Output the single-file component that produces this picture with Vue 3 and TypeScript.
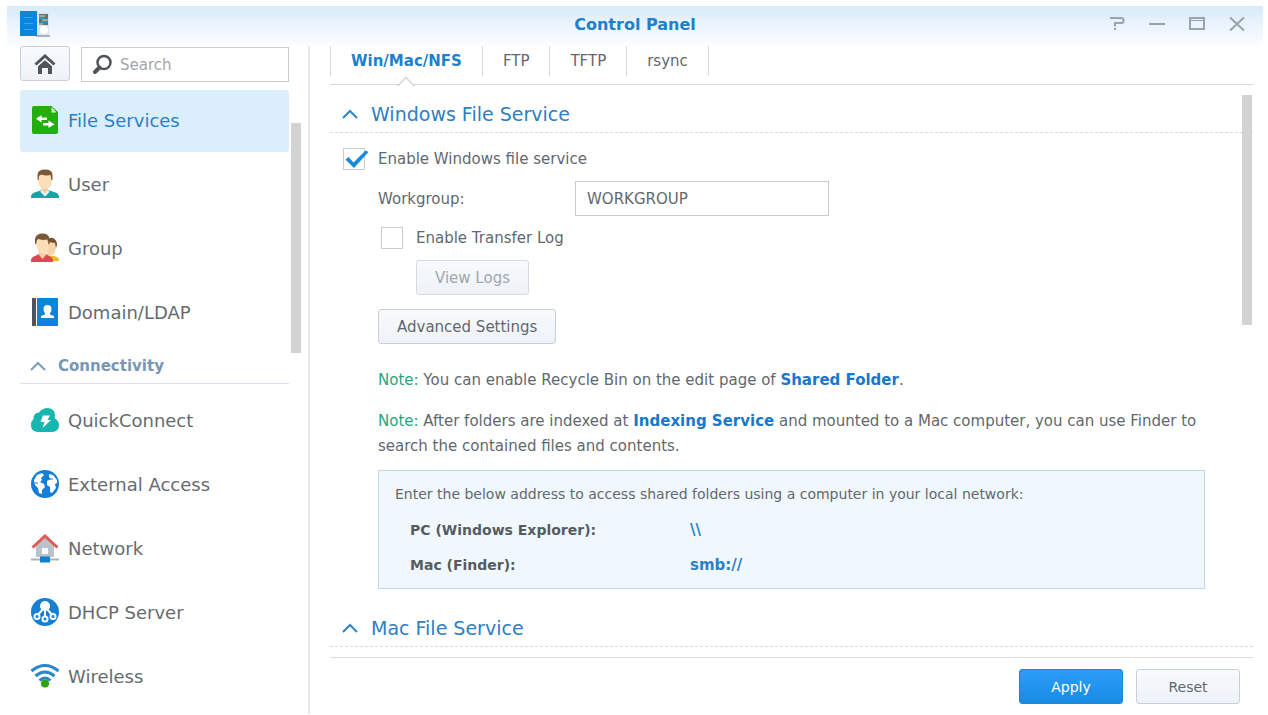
<script setup lang="ts">
import { ref } from 'vue'

type IconName = 'file' | 'user' | 'group' | 'domain' | 'quick' | 'globe' | 'network' | 'dhcp' | 'wifi'
interface NavItem { label: string; icon: IconName }

const sharing: NavItem[] = [
  { label: 'File Services', icon: 'file' },
  { label: 'User', icon: 'user' },
  { label: 'Group', icon: 'group' },
  { label: 'Domain/LDAP', icon: 'domain' },
]
const connectivity: NavItem[] = [
  { label: 'QuickConnect', icon: 'quick' },
  { label: 'External Access', icon: 'globe' },
  { label: 'Network', icon: 'network' },
  { label: 'DHCP Server', icon: 'dhcp' },
  { label: 'Wireless', icon: 'wifi' },
]
const groups = [
  { title: '', items: sharing },
  { title: 'Connectivity', items: connectivity },
]
const tabs = ['Win/Mac/NFS', 'FTP', 'TFTP', 'rsync']

const activeItem = ref('File Services')
const activeTab = ref('Win/Mac/NFS')
const search = ref('')
const windowsEnabled = ref(true)
const transferLog = ref(false)
const workgroup = ref('WORKGROUP')
</script>

<template>
  <div class="window">
    <header class="titlebar">
      <svg class="app-icon" width="32" height="28" viewBox="0 0 32 28" aria-hidden="true">
        <rect x="16" y="2" width="14" height="24" fill="#dde6ee" />
        <rect x="17" y="25" width="14" height="2" fill="#a9b4bd" />
        <rect x="1" y="1" width="17" height="25" fill="#0a86dc" />
        <path d="M5 7.500h9M5 13.500h9M5 19.500h9" stroke="#3aa3ea" />
        <rect x="20" y="4" width="9" height="11" fill="#58787d" />
        <path d="M20 6h6M23 10h6M20 14h4" stroke="#d8dc9a" />
        <path d="M20 8h5M23 12h5" stroke="#2f93c9" stroke-width="2" />
        <circle cx="25" cy="20" r="4" fill="#fff" />
      </svg>
      <h1 class="title">Control Panel</h1>
      <div class="controls">
        <button type="button" aria-label="Help">
          <svg width="16" height="16" viewBox="0 0 16 16"><path d="M1 2h11.500q2 0 2 2v1q0 2-2 2H6v3.500" fill="none" stroke="#98a3ae" stroke-width="2" /><rect x="5" y="12" width="2" height="2" fill="#98a3ae" /></svg>
        </button>
        <button type="button" aria-label="Minimize">
          <svg width="16" height="16" viewBox="0 0 16 16"><path d="M0 8h16" stroke="#98a3ae" stroke-width="2" /></svg>
        </button>
        <button type="button" aria-label="Maximize">
          <svg width="16" height="16" viewBox="0 0 16 16"><path d="M1 2h14v11H1z" fill="none" stroke="#98a3ae" stroke-width="2" /><path d="M2 4.500h12" stroke="#98a3ae" /></svg>
        </button>
        <button type="button" aria-label="Close">
          <svg width="16" height="16" viewBox="0 0 16 16"><path d="M1 1.500l14 13M15 1.500l-14 13" stroke="#98a3ae" stroke-width="2" /></svg>
        </button>
      </div>
    </header>

    <div class="body">
      <aside class="sidebar">
        <div class="tools">
          <button type="button" class="btn home" aria-label="Home">
            <svg width="22" height="22" viewBox="0 0 22 22"><path d="M1.500 11.500L11 3l9.500 8.500" fill="none" stroke="#50555b" stroke-width="3" /><path d="M4 13l7-6 7 6v8h-4v-6H8v6H4z" fill="#50555b" /><path d="M4 12.800L11 6.500l7 6.300" fill="none" stroke="#f4f7fa" /></svg>
          </button>
          <div class="search">
            <svg width="22" height="22" viewBox="0 0 22 22" aria-hidden="true"><circle cx="13" cy="8.500" r="6.500" fill="none" stroke="#50555b" stroke-width="2.500" /><path d="M8.500 13.500L4 18" stroke="#50555b" stroke-width="4" stroke-linecap="round" /></svg>
            <input v-model="search" type="text" placeholder="Search" aria-label="Search">
          </div>
        </div>

        <nav class="nav">
          <template v-for="group in groups" :key="group.title">
            <button v-if="group.title" type="button" class="category">
              <svg width="16" height="12" viewBox="0 0 16 12"><path d="M1 10l7-7 7 7" fill="none" stroke="#7d9cb9" stroke-width="2" /></svg>
              {{ group.title }}
            </button>
            <a
              v-for="item in group.items"
              :key="item.label"
              href="#"
              class="item"
              :class="{ active: item.label === activeItem }"
              @click.prevent="activeItem = item.label"
            >
              <svg class="icon" width="30" height="30" viewBox="0 0 30 30" aria-hidden="true">
                <g v-if="item.icon === 'file'">
                  <path d="M4 1h17.500L28 7v20q0 2-2 2H4q-2 0-2-2V3q0-2 2-2z" fill="#22ae0c" />
                  <path d="M21.500 2v5.500h5z" fill="#d9f2d2" />
                  <path d="M11.500 10v2.500H17v2.500h-5.500v2.500L6 13.700zM18.500 15.500V18H13v2.500h5.500V23l6-3.800z" fill="#fff" />
                </g>
                <g v-else-if="item.icon === 'user'">
                  <path d="M1 29v-1q0-4 5-5l6-2h6l6 2q5 1 5 5v1z" fill="#12a7a4" />
                  <path d="M12 17h6v5l-3 4-4-3z" fill="#f2cda0" />
                  <path d="M11 22l4 4 4-4" fill="none" stroke="#e9faf8" stroke-width="2" />
                  <path d="M8 6q1-4 7-4t7 4v5q0 9-7 9t-7-9z" fill="#fbdfb9" />
                  <path d="M7.500 11V6q0-5.500 7.500-5.500T22.500 6v5h-1l-1-5q-5 1-9-.5L9 7l-.5 4z" fill="#7b5837" />
                </g>
                <g v-else-if="item.icon === 'group'">
                  <path d="M18 28h11v-1q0-3-5-4h-6z" fill="#eabd22" />
                  <path d="M17 9q2-4 6-3 4 2 3 7-.5 7-3 9l-6 2z" fill="#f8d4a8" />
                  <path d="M17 8q2-4 6-3 4 2 4 7l-1 3-1-5-7-1z" fill="#76502f" />
                  <path d="M1 29v-1q0-4 4-5l4-2h7l3 2q4 1 4 5v1z" fill="#e34556" />
                  <path d="M9 17h7v5l-3.500 4L9 22z" fill="#f2cda0" />
                  <path d="M6 6q1-4 7-4t6 4v5q-1 10-6 10T6 11z" fill="#fbdfb9" />
                  <path d="M5 11V6q1-5.500 7.500-5.500T19.500 6v5l-1 .5-1-5q-5 1-9-.5L7 7l-1 4z" fill="#7b5837" />
                </g>
                <g v-else-if="item.icon === 'domain'">
                  <path d="M2 1h4v28H2z" fill="#4c555f" />
                  <path d="M7 1h21v28H7z" fill="#0a84dc" />
                  <path d="M13.500 12q0-4 4-4t4 4q0 3-1.500 4v1.500l4 1.500v2H11v-2l4-1.500V16q-1.500-1-1.500-4z" fill="#fff" />
                </g>
                <g v-else-if="item.icon === 'quick'">
                  <path d="M8 27q-7 0-7-7 0-4 2.500-6-.5-6 5.500-6.500Q12 3 18 3q7 1 7 7 0 2-.5 3 4.500 3 4.500 7 0 7-7 7z" fill="#17b7b0" />
                  <path d="M13 10.500h7l-2.500 4.500H21l-8.500 8 2-6H10.500z" fill="#fff" />
                </g>
                <g v-else-if="item.icon === 'globe'">
                  <circle cx="15" cy="15" r="14" fill="#147fd7" />
                  <path d="M4 11l3-5 5-2 2 2-3 3 1 2-2 2 4 2 1 3-3 3v4l-3-1-1-5-3-3zM19 5l4 1 4 5v3l-2 1 1 4-4 5-2-1v-5l-3-2v-4l4-2-2-2z" fill="#fff" />
                  <path d="M20 10h3M5 14h3" stroke="#147fd7" />
                </g>
                <g v-else-if="item.icon === 'network'">
                  <path d="M6 12l9-8 9 8v12H6z" fill="#bcc2cc" />
                  <path d="M12 15h6v6h-6z" fill="#fff" />
                  <path d="M2.500 14.500L15 3l12.500 11.500" fill="none" stroke="#e05a55" stroke-width="3" />
                  <path d="M1 26.500h28" stroke="#a9b2bb" stroke-width="2" />
                  <path d="M10 23.500h10v6H10z" fill="#147fca" />
                </g>
                <g v-else-if="item.icon === 'dhcp'">
                  <circle cx="15" cy="15" r="14" fill="#1580d3" />
                  <path d="M15 10v10M13 12l-6 7M17 12l6 7" stroke="#fff" stroke-width="2" />
                  <circle cx="15" cy="9" r="5" fill="#fff" />
                  <g fill="#1580d3" stroke="#fff" stroke-width="2"><circle cx="7" cy="19.500" r="2.500" /><circle cx="15" cy="22" r="2.500" /><circle cx="23" cy="19.500" r="2.500" /></g>
                </g>
                <g v-else>
                  <g fill="none" stroke="#2b86cd" stroke-width="3"><path d="M1.500 10q13.500-11 27 0" /><path d="M5.500 15q9.500-8 19 0" /><path d="M9.500 19.500q5.500-5 11 0" /></g>
                  <circle cx="15" cy="22.500" r="4" fill="#2da30f" />
                </g>
              </svg>
              {{ item.label }}
            </a>
          </template>
          <div class="thumb nav-thumb"></div>
        </nav>
      </aside>

      <main class="main">
        <div class="tabs" role="tablist">
          <button
            v-for="tab in tabs"
            :key="tab"
            type="button"
            role="tab"
            class="tab"
            :class="{ active: tab === activeTab }"
            :aria-selected="tab === activeTab"
            @click="activeTab = tab"
          >
            {{ tab }}
            <svg v-if="tab === activeTab" class="notch" width="18" height="10" viewBox="0 0 18 10"><path d="M0 10L9 1l9 9z" fill="#fff" /><path d="M0 9.500h1L9 1.500l8 8h1" fill="none" stroke="#d4d6d9" stroke-width="1.500" /></svg>
          </button>
        </div>

        <div class="content">
          <h2 class="section">
            <svg width="16" height="12" viewBox="0 0 16 12" aria-hidden="true"><path d="M1 10l7-7 7 7" fill="none" stroke="#2a86c8" stroke-width="2" /></svg>
            Windows File Service
          </h2>

          <form class="form" @submit.prevent>
            <label class="check">
              <span class="box">
                <input v-model="windowsEnabled" type="checkbox">
                <svg v-if="windowsEnabled" width="26" height="22" viewBox="0 0 26 22"><path d="M2.500 11.500l3-2.500 5 5.500L22.500 2.500l3 1.500L11 20z" fill="#168add" /></svg>
              </span>
              Enable Windows file service
            </label>
            <div class="fields">
              <div class="row">
                <label for="workgroup">Workgroup:</label>
                <input id="workgroup" v-model="workgroup" type="text">
              </div>
              <label class="check log">
                <span class="box"><input v-model="transferLog" type="checkbox"></span>
                Enable Transfer Log
              </label>
              <button type="button" class="btn view" disabled>View Logs</button>
              <button type="button" class="btn advanced">Advanced Settings</button>
              <p><span class="note">Note:</span> You can enable Recycle Bin on the edit page of <a href="#">Shared Folder</a>.</p>
              <p><span class="note">Note:</span> After folders are indexed at <a href="#">Indexing Service</a> and mounted to a Mac computer, you can use Finder to search the contained files and contents.</p>
              <div class="panel">
                <div class="lead">Enter the below address to access shared folders using a computer in your local network:</div>
                <dl>
                  <dt>PC (Windows Explorer):</dt><dd>\\</dd>
                  <dt>Mac (Finder):</dt><dd>smb://</dd>
                </dl>
              </div>
            </div>
          </form>

          <h2 class="section">
            <svg width="16" height="12" viewBox="0 0 16 12" aria-hidden="true"><path d="M1 10l7-7 7 7" fill="none" stroke="#2a86c8" stroke-width="2" /></svg>
            Mac File Service
          </h2>
          <div class="thumb main-thumb"></div>
        </div>

        <footer class="footer">
          <button type="button" class="btn primary">Apply</button>
          <button type="button" class="btn reset">Reset</button>
        </footer>
      </main>
    </div>
  </div>
</template>

<style>
body { margin: 0; background: #fff; }
</style>

<style scoped>
.window {
  box-sizing: border-box;
  display: flex;
  flex-direction: column;
  min-height: 100vh;
  padding: 6px 5px 1px 7px;
  font-family: "DejaVu Sans", Verdana, sans-serif;
  font-size: 15px;
  color: #62686e;
}
.window *, .window *::before { box-sizing: border-box; }
button, input { font: inherit; color: inherit; }
a { color: #1878cc; text-decoration: none; }
svg { display: block; flex: none; }

.titlebar {
  display: grid;
  grid-template-columns: 1fr auto 1fr;
  align-items: center;
  height: 40px;
  padding: 0 12px 4px;
  background: linear-gradient(#d9ebfa, #fcfdff);
}
.title { margin: 0; font-size: 16px; font-weight: bold; color: #217fca; }
.controls { display: flex; justify-content: flex-end; gap: 24px; padding-right: 6px; }
.controls button { padding: 0; border: 0; background: none; }

.body { flex: 1; display: grid; grid-template-columns: 303px minmax(0, 1fr); }
.sidebar { padding: 0 19px 0 13px; border-right: 2px solid #e6e7e9; }
.tools { display: flex; gap: 11px; align-items: flex-start; }
.btn {
  display: flex;
  align-items: center;
  justify-content: center;
  height: 35px;
  padding: 0 18px;
  border: 1px solid #c9cfd6;
  border-radius: 3px;
  background: linear-gradient(#f8fafc, #eef2f8);
}
.home { flex: none; width: 50px; padding: 0; }
.search { flex: 1; min-width: 0; display: flex; align-items: center; gap: 7px; height: 35px; margin-top: 1px; padding: 0 9px; border: 1px solid #c9cccf; }
.search input { flex: 1; min-width: 0; padding: 0; border: 0; outline: 0; background: none; }
.search input::placeholder { color: #a2a6aa; opacity: 1; }

.nav { position: relative; display: flex; flex-direction: column; gap: 2px; margin-top: 8px; }
.item { display: flex; align-items: center; gap: 8px; height: 62px; padding: 0 0 2px 10px; border-radius: 3px; font-size: 18px; color: #666b70; }
.item.active { background: #dbeefc; color: #2b7fc6; }
.category {
  display: flex;
  align-items: center;
  gap: 12px;
  height: 40px;
  margin: -2px 0 4px;
  padding: 4px 10px 0;
  border: 0;
  border-bottom: 1px solid #dbe2e9;
  background: none;
  font-weight: bold;
  color: #7797b5;
}
.thumb { position: absolute; width: 10px; height: 230px; background: #d3d3d3; }
.nav-thumb { top: 33px; right: -12px; }
.main-thumb { top: 10px; right: 1px; }

.main { display: flex; flex-direction: column; padding: 0 10px 0 20px; }
.tabs { display: flex; align-items: flex-start; height: 39px; border-bottom: 1px solid #d4d6d9; }
.tab {
  position: relative;
  height: 30px;
  padding: 0 20px;
  border: 0;
  border-right: 1px solid #d9dbde;
  background: none;
}
.tab:first-child { border-left: 1px solid #d9dbde; }
.tab.active { font-weight: bold; color: #1f7fcd; }
.notch { position: absolute; left: 50%; top: 30px; margin-left: -9px; }

.content { position: relative; flex: 1; padding-bottom: 10px; }
.section {
  display: flex;
  align-items: center;
  gap: 13px;
  height: 38px;
  margin: 10px 0 0;
  padding-left: 12px;
  border-bottom: 1px dashed #d7dadd;
  font-size: 19px;
  font-weight: normal;
  color: #2d80c2;
}
.form { padding: 15px 48px 10px 13px; }
.check { display: flex; align-items: center; gap: 13px; height: 22px; }
.box { position: relative; width: 22px; height: 22px; }
.box input { appearance: none; display: block; width: 22px; height: 22px; margin: 0; border: 1px solid #c9cccf; background: #fff; }
.box svg { position: absolute; left: 0; top: 0; pointer-events: none; }
.fields { padding-left: 35px; }
.row { display: grid; grid-template-columns: 197px 254px; align-items: center; margin-top: 11px; }
.row input { height: 35px; padding: 0 11px; border: 1px solid #c9cccf; border-radius: 0; background: #fff; }
.log { margin: 11px 0 0 3px; }
.view { margin: 11px 0 0 38px; }
.view:disabled { color: #a0a7af; border-color: #d3dae2; }
.advanced { margin-top: 14px; }
p { margin: 24px 0 0; line-height: 25px; }
p + p { margin-top: 16px; }
p a { font-weight: bold; }
.note { color: #27a67c; }
.panel { margin-top: 11px; padding: 13px 16px 11px; border: 1px solid #c0dbe6; background: #f1f8fd; }
.lead { font-size: 14px; line-height: 20px; }
dl { display: grid; grid-template-columns: 280px 1fr; row-gap: 11px; margin: 14px 0 0 15px; font-size: 14px; line-height: 24px; font-weight: bold; }
dt { color: #555c62; }
dd { margin: 0; font-size: 15px; color: #2c80c8; }

.footer { display: flex; justify-content: flex-end; gap: 13px; padding: 11px 13px 10px; border-top: 1px solid #d9dadc; }
.footer .btn { width: 104px; font-size: 14px; }
.footer .primary { border-color: #1e86d2; background: linear-gradient(#2b9df6, #188be6); color: #fff; }
</style>
